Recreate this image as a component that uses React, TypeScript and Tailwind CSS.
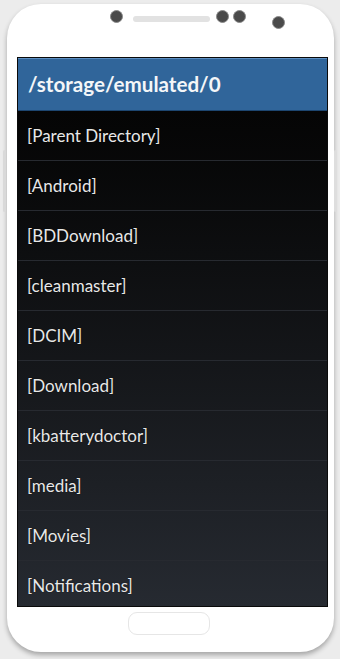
import React from "react";

const folders = [
  "[Parent Directory]",
  "[Android]",
  "[BDDownload]",
  "[cleanmaster]",
  "[DCIM]",
  "[Download]",
  "[kbatterydoctor]",
  "[media]",
  "[Movies]",
  "[Notifications]",
];

const Dot: React.FC<{ className?: string }> = ({ className = "" }) => (
  <div
    className={`w-[13px] h-[13px] rounded-full bg-[#4a4a4a] border border-[#8a8a8a] ${className}`}
  />
);

export default function App() {
  return (
    <div
      className="relative w-[340px] h-[659px] bg-[#ececec] overflow-hidden"
      style={{ fontFamily: "Lato, 'Open Sans', sans-serif" }}
    >
      {/* side keys */}
      <div className="absolute left-[3px] top-[150px] w-[3px] h-[62px] rounded-sm bg-[#d9d9d9]" />
      <div className="absolute left-[334px] top-[150px] w-[3px] h-[62px] rounded-sm bg-[#dedede]" />

      {/* phone body */}
      <div className="ml-[7px] mt-[4px] w-[327px] h-[648px] rounded-[34px] bg-white shadow-[0_3px_5px_rgba(0,0,0,0.3)] flex flex-col">
        {/* earpiece + camera */}
        <div className="flex items-start h-[53px] pl-[103px] pt-[6px]">
          <Dot />
          <div className="ml-[10px] mt-[6px] w-[77px] h-[6px] rounded-full bg-[#e2e2e2]" />
          <Dot className="ml-[6px]" />
          <Dot className="ml-[4px]" />
          <Dot className="ml-[26px] mt-[6px]" />
        </div>

        {/* screen */}
        <div className="ml-[10px] w-[311px] h-[550px] border border-[#0a0a0a] flex flex-col overflow-hidden">
          <div className="h-[53px] shrink-0 bg-[#30659a] border-t border-[#5d8fc2] border-b border-b-[#1d4670] flex items-center pl-[10px]">
            <span className="text-[20.6px] font-bold text-[#f4f6f8]">
              /storage/emulated/0
            </span>
          </div>
          <div className="flex-1 flex flex-col bg-gradient-to-b from-[#050505] to-[#262a31] overflow-hidden">
            {folders.map((name) => (
              <div
                key={name}
                className="h-[50px] shrink-0 flex items-center pl-[9px] border-b border-[#272a30] text-[17px] text-[#e8e8e8] [text-shadow:0_0_1px_#000]"
              >
                {name}
              </div>
            ))}
          </div>
        </div>

        {/* home key */}
        <div className="mt-[5px] ml-[121px] w-[82px] h-[23px] rounded-[9px] border border-[#e6e6e6] bg-white" />
      </div>
    </div>
  );
}
